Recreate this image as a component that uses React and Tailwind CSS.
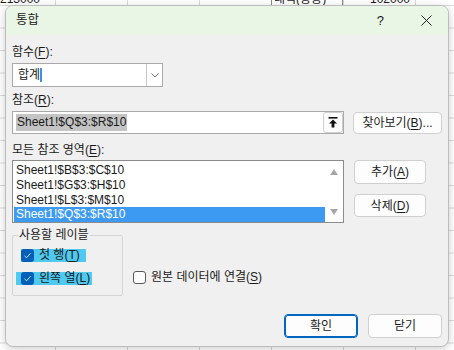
import React from "react";

function Key({ k }) {
  return (
    <>
      (<span className="underline underline-offset-2">{k}</span>)
    </>
  );
}

function Check({ on }) {
  return on ? (
    <span className="flex h-[13px] w-[13px] shrink-0 items-center justify-center rounded-[3px] bg-[#005fb8]">
      <svg width="9" height="9" viewBox="0 0 9 9" fill="none">
        <path d="M1.5 4.8 L3.6 6.8 L7.6 2.2" stroke="#cfe3f7" strokeWidth="1" />
      </svg>
    </span>
  ) : (
    <span className="h-[13px] w-[13px] shrink-0 rounded-[3px] border border-[#5a5a5a] bg-[#fbfbfb]" />
  );
}

function Btn({ children, primary, className = "" }) {
  return (
    <button
      className={`flex items-center justify-center rounded-[4px] bg-[#fdfdfd] ${
        primary ? "border border-[#0067c0] shadow-[inset_0_0_0_1px_#0067c0]" : "border border-[#d0d0d0]"
      } ${className}`}
    >
      {children}
    </button>
  );
}

export default function App() {
  const areas = ["Sheet1!$B$3:$C$10", "Sheet1!$G$3:$H$10", "Sheet1!$L$3:$M$10", "Sheet1!$Q$3:$R$10"];
  return (
    <div className="relative h-[350px] w-[454px] overflow-hidden bg-white bg-[linear-gradient(to_right,#dadada_1px,transparent_1px),linear-gradient(to_bottom,#dadada_1px,transparent_1px)] bg-[size:72px_22.5px] bg-[position:55px_5px] font-['Liberation_Sans','Noto_Sans_CJK_KR',sans-serif] text-[12px] text-[#1a1a1a]">
      {/* spreadsheet cells behind the dialog */}
      <div className="flex h-[5px] overflow-hidden leading-[14px]">
        <div className="flex w-[55px] items-end">
          <span className="-mb-[1px]">213000</span>
        </div>
        <div className="w-[73px]" />
        <div className="w-[71px]" />
        <div className="w-[72px]" />
        <div className="flex w-[72px] items-end border-x border-[#8a8a8a] pl-[2px]">
          <span className="-mb-[1px]">내역(응용)</span>
        </div>
        <div className="flex w-[72px] items-end justify-end pr-[5px]">
          <span className="-mb-[1px]">102000</span>
        </div>
      </div>

      {/* dialog */}
      <div className="absolute left-[5px] top-[5px] flex h-[342px] w-[444px] flex-col overflow-hidden rounded-[8px] border border-[#bdbdbd] bg-[#f0f0f0] shadow-[0_2px_8px_rgba(0,0,0,0.2)]">
        <div className="flex h-[29px] shrink-0 items-center bg-[#e9f6e6] pl-[10px]">
          <span className="text-[12.5px]">통합</span>
          <span className="ml-auto text-[13px]">?</span>
          <svg className="ml-[37px] mr-[16px]" width="11" height="11" viewBox="0 0 11 11">
            <path d="M0.5 0.5 L10.5 10.5 M10.5 0.5 L0.5 10.5" stroke="#222" strokeWidth="1" />
          </svg>
        </div>

        <div className="flex flex-1 flex-col px-[6px]">
          <div className="mt-[9px] h-[16px] leading-[16px]">
            함수<Key k="F" />:
          </div>
          <div className="mt-[3px] flex h-[24px] w-[151px] border border-[#a9a9a9] bg-white">
            <div className="flex flex-1 items-center pl-[5px]">
              <span>합계</span>
              <span className="h-[14px] w-[2px] bg-[#3d8ee6]" />
            </div>
            <div className="flex w-[16px] items-center justify-center border-l border-[#c8c8c8]">
              <svg width="8" height="5" viewBox="0 0 8 5">
                <path d="M0.5 0.5 L4 4 L7.5 0.5" stroke="#707070" fill="none" />
              </svg>
            </div>
          </div>

          <div className="mt-[5px] h-[16px] leading-[16px]">
            참조<Key k="R" />:
          </div>
          <div className="mt-[3px] flex items-center gap-[9px]">
            <div className="flex h-[23px] w-[332px] items-center border border-[#a9a9a9] bg-white pl-[3px]">
              <span className="bg-[#c4c4c4] px-[1px] leading-[17px]">Sheet1!$Q$3:$R$10</span>
              <div className="ml-auto flex h-[21px] w-[20px] items-center justify-center rounded-[3px] border border-[#cfcfcf] bg-[#fdfdfd]">
                <svg width="10" height="11" viewBox="0 0 10 11">
                  <rect x="0.5" y="0" width="9" height="1.6" fill="#111" />
                  <path d="M5 2.5 L9 6.5 L6.4 6.5 L6.4 10.5 L3.6 10.5 L3.6 6.5 L1 6.5 Z" fill="#111" />
                </svg>
              </div>
            </div>
            <Btn className="h-[22px] w-[89px]">
              찾아보기<Key k="B" />...
            </Btn>
          </div>

          <div className="mt-[8px] h-[16px] leading-[16px]">
            모든 참조 영역<Key k="E" />:
          </div>
          <div className="mt-[2px] flex items-start gap-[10px]">
            <div className="flex h-[63px] w-[332px] border border-[#8c8c8c] bg-white px-[1px] pt-[2px]">
              <div className="flex flex-1 flex-col">
                {areas.map((a, i) => (
                  <div
                    key={a}
                    className={`h-[15px] overflow-hidden pl-[2px] leading-[15px] ${i === 3 ? "bg-[#3c9af3] text-white" : ""}`}
                  >
                    {a}
                  </div>
                ))}
              </div>
              <div className="flex w-[17px] flex-col items-center justify-between pb-[7px] pt-[6px]">
                <svg width="8" height="6" viewBox="0 0 8 6">
                  <path d="M4 0 L8 6 L0 6 Z" fill="#a6a6a6" />
                </svg>
                <svg width="8" height="6" viewBox="0 0 8 6">
                  <path d="M0 0 L8 0 L4 6 Z" fill="#a6a6a6" />
                </svg>
              </div>
            </div>
            <div className="flex flex-col gap-[10px]">
              <Btn className="h-[24px] w-[72px]">
                추가<Key k="A" />
              </Btn>
              <Btn className="h-[23px] w-[72px]">
                삭제<Key k="D" />
              </Btn>
            </div>
          </div>

          <div className="mt-[5px] flex items-start">
            <fieldset className="h-[68px] w-[111px] rounded-[2px] border border-[#d5d5d5] px-[8px]">
              <legend className="ml-[-3px] px-[1px] leading-[14px]">사용할 레이블</legend>
              <div className="mt-[6px] flex h-[14px] items-center">
                <span className="flex items-center gap-[5px] bg-[#4fc9f0] pr-[6px]">
                  <Check on />
                  <span className="leading-[12px]">
                    첫 행<Key k="T" />
                  </span>
                </span>
              </div>
              <div className="mt-[9px] flex h-[14px] items-center">
                <span className="-ml-[5px] flex items-center gap-[5px] bg-[#4fc9f0] pl-[5px] pr-[2px]">
                  <Check on />
                  <span className="leading-[12px]">
                    왼쪽 열<Key k="L" />
                  </span>
                </span>
              </div>
            </fieldset>
            <div className="ml-[10px] mt-[40px] flex items-center gap-[5px]">
              <Check />
              <span>
                원본 데이터에 연결<Key k="S" />
              </span>
            </div>
          </div>

          <div className="mt-auto mb-[8px] flex justify-end gap-[10px]">
            <Btn primary className="h-[24px] w-[74px]">
              확인
            </Btn>
            <Btn className="h-[24px] w-[74px]">닫기</Btn>
          </div>
        </div>
      </div>
    </div>
  );
}
